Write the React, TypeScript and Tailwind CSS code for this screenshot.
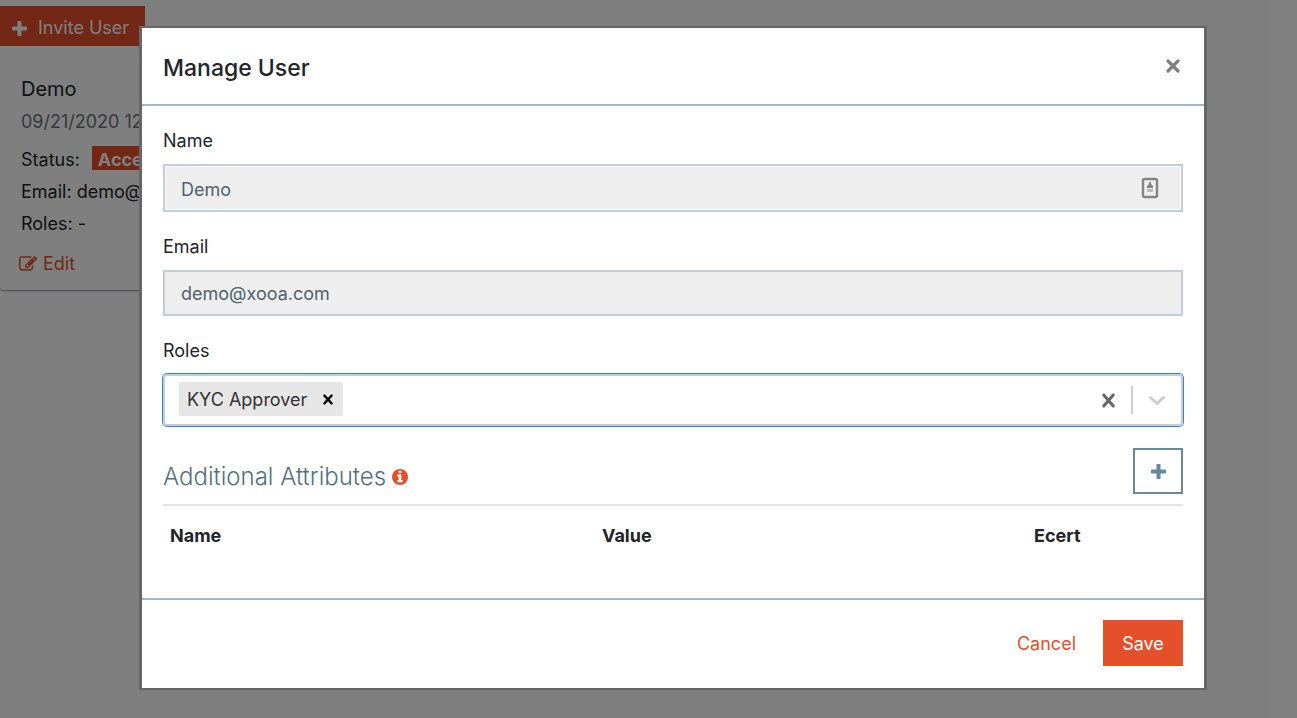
import { useState } from "react";
import type { ReactNode } from "react";

interface IconProps {
  className: string;
}

interface FieldProps {
  id: string;
  label: string;
  children: ReactNode;
}

function PlusIcon({ className }: IconProps) {
  return (
    <svg viewBox="0 192 1408 1408" className={className} fill="currentColor" aria-hidden="true">
      <path d="M1408 800v192q0 40-28 68t-68 28h-416v416q0 40-28 68t-68 28h-192q-40 0-68-28t-28-68v-416h-416q-40 0-68-28t-28-68v-192q0-40 28-68t68-28h416v-416q0-40 28-68t68-28h192q40 0 68 28t28 68v416h416q40 0 68 28t28 68z" />
    </svg>
  );
}

function InfoIcon({ className }: IconProps) {
  return (
    <svg viewBox="0 128 1536 1536" className={className} fill="currentColor" aria-hidden="true">
      <path d="M1024 1376v-160q0-14-9-23t-23-9h-96v-512q0-14-9-23t-23-9h-320q-14 0-23 9t-9 23v160q0 14 9 23t23 9h96v320h-96q-14 0-23 9t-9 23v160q0 14 9 23t23 9h448q14 0 23-9t9-23zm-128-896v-160q0-14-9-23t-23-9h-192q-14 0-23 9t-9 23v160q0 14 9 23t23 9h192q14 0 23-9t9-23zm640 416q0 209-103 385.500t-279.500 279.500-385.500 103-385.500-103-279.500-279.500-103-385.500 103-385.500 279.500-279.500 385.500-103 385.500 103 279.500 279.500 103 385.500z" />
    </svg>
  );
}

function EditIcon() {
  return (
    <svg viewBox="0 0 1792 1536" className="h-4 w-[18px]" fill="currentColor" stroke="currentColor" strokeWidth="30" aria-hidden="true">
      <path d="M888 1056l116-116-152-152-116 116v56h96v96h56zM1328 336q-16-16-33 1L945 687q-17 17-1 33t33-1l350-350q17-17 1-33zM1408 930v190q0 119-84.500 203.500T1120 1408H288q-119 0-203.500-84.500T0 1120V288q0-119 84.500-203.500T288 0h832q63 0 117 25 15 7 18 23 3 17-9 29l-49 49q-14 14-32 8-23-6-45-6H288q-66 0-113 47t-47 113v832q0 66 47 113t113 47h832q66 0 113-47t47-113V994q0-13 9-22l64-64q15-15 35-7t20 29zM1312 192l288 288-672 672H640V864zM1756 324l-92 92-288-288 92-92q28-28 68-28t68 28l152 152q28 28 28 68t-28 68z" />
    </svg>
  );
}

function ContactIcon() {
  return (
    <svg viewBox="0 0 18 22" className="h-[22px] w-[18px]" fill="none" aria-hidden="true">
      <rect x="2" y="2" width="14" height="18" rx="1.500" stroke="#858585" strokeWidth="2.400" />
      <path d="M8 5h2v2l2 2v2H6V9l2-2z" fill="#858585" />
      <path d="M6 12h6v3H6z" fill="#bcbcbc" />
    </svg>
  );
}

function CrossIcon({ className }: IconProps) {
  return (
    <svg viewBox="0 0 14 14" className={className} preserveAspectRatio="none" fill="none" aria-hidden="true">
      <path d="M2 2l10 10M12 2L2 12" stroke="currentColor" strokeWidth="3.200" strokeLinecap="round" />
    </svg>
  );
}

function Field({ id, label, children }: FieldProps) {
  return (
    <div className="flex flex-col gap-[9px]">
      <label htmlFor={id} className="leading-7">{label}</label>
      {children}
    </div>
  );
}

function UserCard() {
  return (
    <div className="min-h-screen bg-white pt-1.5">
      <button className="flex h-10 w-[145px] items-center gap-[11px] bg-[#e4502a] pt-1 pl-3 whitespace-nowrap text-white">
        <PlusIcon className="h-[15px] w-[15px] shrink-0" />
        Invite User
      </button>
      <div className="mt-4 w-[430px] rounded border-b border-gray-400 bg-white py-[11px] pb-1.5 pl-[21px] shadow">
        <h2 className="mb-px text-xl leading-8">Demo</h2>
        <p className="leading-8 text-[#6c757d]">09/21/2020 12:45 PM</p>
        <p className="mt-1 flex h-9 items-center gap-3">
          Status:
          <span className="mb-1 bg-[#e4502a] px-1.5 pt-[3px] leading-[21px] font-bold text-white">Accepted</span>
        </p>
        <p className="leading-7">Email: demo@xooa.com</p>
        <p className="mt-1 leading-7">Roles: -</p>
        <button className="mt-1.5 -ml-0.5 flex h-10 items-center gap-1.5 text-[#e4502a]">
          <EditIcon />
          Edit
        </button>
      </div>
    </div>
  );
}

export default function App() {
  const [roles, setRoles] = useState<string[]>(["KYC Approver"]);

  return (
    <div className="relative h-screen overflow-hidden font-['Inter',sans-serif] text-lg text-[#212529]">
      <UserCard />

      {/* Backdrop and dialog */}
      <div className="absolute inset-0 bg-black/50 pt-[26px] pr-[90px] pl-[139px]">
        <div role="dialog" aria-labelledby="dialog-title" className="border-x-[3px] border-y-2 border-[#666] bg-white">
          <header className="flex h-[78px] items-center justify-between border-b-2 border-[#a5b7c2] pr-6 pl-[21px]">
            <h1 id="dialog-title" className="pt-1.5 text-[23px] font-medium">Manage User</h1>
            <button aria-label="Close" className="text-[#808080]">
              <CrossIcon className="h-3.5 w-3.5" />
            </button>
          </header>

          <div className="flex flex-col gap-[21px] px-[21px] pt-[21px]">
            <Field id="name" label="Name">
              <div className="flex h-12 items-center border-2 border-[#bfced7] bg-[#eee] pr-[22px] inset-ring inset-ring-white">
                <input id="name" defaultValue="Demo" disabled className="h-full min-w-0 flex-1 px-4 pt-0.5 text-[#4f626d]" />
                <ContactIcon />
              </div>
            </Field>

            <Field id="email" label="Email">
              <input
                id="email"
                defaultValue="demo@xooa.com"
                disabled
                className="h-[46px] border-2 border-[#bfced7] bg-[#eee] px-4 text-[#4f626d]"
              />
            </Field>

            <Field id="roles" label="Roles">
              <div className="flex h-[52px] items-center rounded border-2 border-[#ccc] px-3.5 ring-1 ring-[#2684ff]">
                {roles.map((role) => (
                  <span key={role} className="mb-0.5 flex h-[34px] items-center gap-4 rounded-xs bg-[#e6e6e6] pt-px pr-2.5 pl-2 text-[#333]">
                    {role}
                    <button aria-label={`Remove ${role}`} onClick={() => setRoles(roles.filter((r) => r !== role))}>
                      <CrossIcon className="h-[11px] w-2.5 text-black" />
                    </button>
                  </span>
                ))}
                <input id="roles" className="h-full min-w-0 flex-1 outline-none" />
                <button aria-label="Clear roles" onClick={() => setRoles([])} className="text-[#666]">
                  <CrossIcon className="h-[15px] w-[13px]" />
                </button>
                <span className="mr-3.5 ml-4 h-7 w-0.5 bg-[#ccc]" />
                <button aria-label="Open roles">
                  <svg viewBox="0 0 20 20" className="h-5 w-5" fill="none" aria-hidden="true">
                    <path d="M3.500 7.500l6.500 6 6.500-6" stroke="#ccc" strokeWidth="3" strokeLinecap="round" />
                  </svg>
                </button>
              </div>
            </Field>

            <section className="pt-px">
              <div className="flex items-center justify-between border-b-2 border-[#e4e4e4] pb-2.5">
                <h2 className="flex items-center gap-1.5 pt-3 text-2xl font-light text-[#53707f]">
                  Additional Attributes
                  <InfoIcon className="h-4 w-4 text-[#e4502a]" />
                </h2>
                <button aria-label="Add attribute" className="flex h-[46px] w-[50px] items-center justify-center border-2 border-[#668a99] text-[#668a99]">
                  <PlusIcon className="h-[15px] w-[15px]" />
                </button>
              </div>
              <table className="mb-[34px] w-full table-fixed text-left">
                <thead>
                  <tr className="h-[58px]">
                    <th className="w-[432px] px-[7px] pt-0.5 font-bold">Name</th>
                    <th className="w-[432px] px-[7px] pt-0.5 font-bold">Value</th>
                    <th className="px-[7px] pt-0.5 font-bold">Ecert</th>
                  </tr>
                </thead>
              </table>
            </section>
          </div>

          <footer className="flex items-center justify-end gap-[27px] border-t-2 border-[#a5b7c2] px-[21px] pt-5 pb-[22px]">
            <button className="pt-0.5 text-[#e4502a]">Cancel</button>
            <button className="h-[46px] w-20 bg-[#e4502a] pt-0.5 text-white">Save</button>
          </footer>
        </div>
      </div>
    </div>
  );
}
